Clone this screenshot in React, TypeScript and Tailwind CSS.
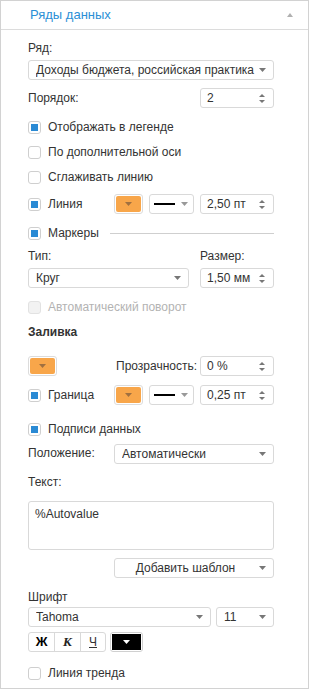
import React from 'react';

const Caret: React.FC<{ color?: string }> = ({ color = '#777' }) => (
  <svg width="7" height="4" viewBox="0 0 7 4" className="shrink-0">
    <path d="M0 0h7L3.5 4z" fill={color} />
  </svg>
);

const Select: React.FC<{ text: string; className?: string; center?: boolean }> = ({ text, className = '', center }) => (
  <div className={`h-[20px] flex items-center rounded-[3px] border border-[#d9d9d9] bg-white pl-[7px] pr-[7px] ${className}`}>
    <span className={`flex-1 truncate ${center ? 'text-center pr-[10px]' : ''}`}>{text}</span>
    <Caret />
  </div>
);

const Spinner: React.FC<{ value: string }> = ({ value }) => (
  <div className="h-[20px] w-[74px] shrink-0 flex items-center rounded-[3px] border border-[#d9d9d9] bg-white pl-[6px] pr-[8px]">
    <span className="flex-1">{value}</span>
    <div className="flex flex-col gap-[3px]">
      <svg width="6" height="3" viewBox="0 0 6 3"><path d="M0 3h6L3 0z" fill="#777" /></svg>
      <svg width="6" height="3" viewBox="0 0 6 3"><path d="M0 0h6L3 3z" fill="#777" /></svg>
    </div>
  </div>
);

const Check: React.FC<{ checked?: boolean; disabled?: boolean; label: string; className?: string }> = ({ checked, disabled, label, className = '' }) => (
  <div className={`h-[20px] flex items-center gap-[7px] ${className}`}>
    <div className={`w-[13px] h-[13px] rounded-[3px] border flex items-center justify-center ${disabled ? 'border-[#e2e2e2] bg-[#f2f2f2]' : 'border-[#cfcfcf] bg-white'}`}>
      {checked && <div className="w-[7px] h-[7px] bg-[#2a8ad4]" />}
    </div>
    <span className={disabled ? 'text-[#b3b3b3]' : ''}>{label}</span>
  </div>
);

const Swatch: React.FC<{ className?: string }> = ({ className = '' }) => (
  <div className={`h-[20px] w-[29px] shrink-0 rounded-[3px] border border-[#dcdcdc] p-[1px] bg-white ${className}`}>
    <div className="h-full w-full rounded-[2px] bg-[#f8a64a] flex items-center justify-center">
      <Caret color="#a07040" />
    </div>
  </div>
);

const LineDrop: React.FC = () => (
  <div className="ml-[6px] h-[20px] w-[45px] shrink-0 flex items-center rounded-[3px] border border-[#d9d9d9] bg-white pl-[4px] pr-[5px]">
    <div className="w-[21px] h-[2px] bg-black" />
    <div className="flex-1" />
    <Caret color="#999" />
  </div>
);

export default function App() {
  return (
    <div className="w-[310px] h-[690px] bg-white font-['Liberation_Sans',Arial,sans-serif] text-[12px] text-[#333]">
      <div className="w-[309px] h-[689px] border border-[#d2d2d2] flex flex-col">
        <div className="h-[29px] shrink-0 border-b border-[#dcdcdc] flex items-center pl-[29px] pr-[15px]">
          <span className="flex-1 text-[13px] text-[#2b8fd6]">Ряды данных</span>
          <svg width="6" height="4" viewBox="0 0 6 4"><path d="M0 4h6L3 0z" fill="#b0b0b0" /></svg>
        </div>

        <div className="ml-[27px] w-[246px] flex flex-col">
          <div className="mt-[10px] h-[16px] flex items-center">Ряд:</div>
          <Select className="mt-[4px]" text="Доходы бюджета, российская практика" />

          <div className="mt-[8px] h-[20px] flex items-center justify-between">
            <span>Порядок:</span>
            <Spinner value="2" />
          </div>

          <Check className="mt-[9px]" checked label="Отображать в легенде" />
          <Check className="mt-[5px]" label="По дополнительной оси" />
          <Check className="mt-[5px]" label="Сглаживать линию" />

          <div className="mt-[7px] h-[20px] flex items-center">
            <Check className="w-[86px]" checked label="Линия" />
            <Swatch />
            <LineDrop />
            <div className="w-[6px]" />
            <Spinner value="2,50 пт" />
          </div>

          <div className="mt-[9px] h-[20px] flex items-center">
            <Check checked label="Маркеры" />
            <div className="flex-1 ml-[11px] h-px bg-[#cfcfcf]" />
          </div>

          <div className="mt-[5px] h-[16px] flex items-center justify-between">
            <span>Тип:</span>
            <span className="w-[74px]">Размер:</span>
          </div>
          <div className="mt-[4px] flex items-center justify-between">
            <Select className="w-[161px]" text="Круг" />
            <Spinner value="1,50 мм" />
          </div>

          <Check className="mt-[9px]" disabled label="Автоматический поворот" />

          <div className="mt-[7px] h-[16px] flex items-center font-bold">Заливка</div>

          <div className="mt-[16px] h-[20px] flex items-center">
            <Swatch />
            <span className="ml-[59px] flex-1">Прозрачность:</span>
            <Spinner value="0 %" />
          </div>

          <div className="mt-[9px] h-[20px] flex items-center">
            <Check className="w-[86px]" checked label="Граница" />
            <Swatch />
            <LineDrop />
            <div className="w-[6px]" />
            <Spinner value="0,25 пт" />
          </div>

          <Check className="mt-[14px]" checked label="Подписи данных" />

          <div className="mt-[5px] h-[20px] flex items-center">
            <span className="w-[86px] -mt-[3px]">Положение:</span>
            <Select className="flex-1" text="Автоматически" />
          </div>

          <div className="mt-[10px] h-[16px] flex items-center">Текст:</div>
          <div className="mt-[11px] h-[49px] rounded-[3px] border border-[#d9d9d9] bg-white px-[6px] py-[3px]">%Autovalue</div>

          <div className="mt-[8px] flex">
            <div className="w-[86px]" />
            <Select className="flex-1" center text="Добавить шаблон" />
          </div>

          <div className="mt-[11px] h-[16px] flex items-center">Шрифт</div>
          <div className="mt-[2px] flex items-center gap-[5px]">
            <Select className="w-[183px]" text="Tahoma" />
            <Select className="flex-1" text="11" />
          </div>

          <div className="mt-[5px] flex items-center">
            <div className="h-[20px] w-[78px] flex rounded-[3px] border border-[#d9d9d9] bg-white">
              <div className="w-[26px] flex items-center justify-center font-bold text-[13px] text-black border-r border-[#d9d9d9]">Ж</div>
              <div className="w-[26px] flex items-center justify-center italic font-bold font-['Liberation_Serif',serif] text-[13px] text-[#222] border-r border-[#d9d9d9]">К</div>
              <div className="flex-1 flex items-center justify-center underline text-[12px]">Ч</div>
            </div>
            <div className="ml-[4px] h-[20px] w-[33px] rounded-[3px] border border-[#d0d0d0] p-[1px] bg-white">
              <div className="h-full w-full bg-black flex items-center justify-center">
                <Caret color="#fff" />
              </div>
            </div>
          </div>

          <Check className="mt-[11px]" label="Линия тренда" />
        </div>
      </div>
    </div>
  );
}
